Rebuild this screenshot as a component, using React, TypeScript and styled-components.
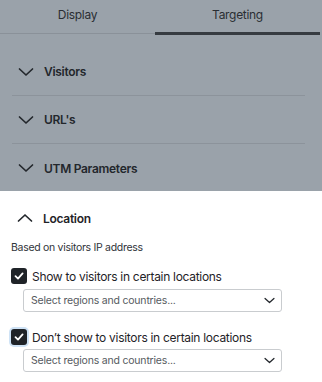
import React from "react";
import styled, { createGlobalStyle } from "styled-components";

const Global = createGlobalStyle`
  html, body { margin: 0; padding: 0; background: #ffffff; }
  body { font-family: Inter, "Noto Sans", Arial, sans-serif; -webkit-font-smoothing: antialiased; }
  * { box-sizing: border-box; }
`;

const Page = styled.div`
  width: 322px;
  height: 382px;
  display: flex;
  flex-direction: column;
  overflow: hidden;
  background: #ffffff;
`;

const Dimmed = styled.div`
  background: #9aa2aa;
  display: flex;
  flex-direction: column;
  height: 191px;
`;

const Tabs = styled.div`
  display: grid;
  grid-template-columns: 155px 1fr;
  height: 35px;
`;

const Tab = styled.div<{ $active?: boolean }>`
  display: flex;
  align-items: center;
  justify-content: center;
  font-size: 12px;
  letter-spacing: -0.3px;
  color: #2a2e33;
  padding-bottom: 4px;
  border-bottom: ${(p) => (p.$active ? "3px solid #363b41" : "1px solid #8a9199")};
  margin-right: ${(p) => (p.$active ? "2px" : "0")};
  height: ${(p) => (p.$active ? "35px" : "34px")};
`;

const List = styled.div`
  padding: 0 17px 0 12px;
  display: flex;
  flex-direction: column;
  margin-top: 13px;
`;

const Item = styled.div<{ $last?: boolean }>`
  display: flex;
  align-items: center;
  gap: 10px;
  height: 48px;
  padding-left: 6px;
  border-bottom: ${(p) => (p.$last ? "none" : "1px solid #8c939b")};
  font-size: 12px;
  letter-spacing: -0.3px;
  font-weight: 600;
  color: #23272c;
`;

const Sheet = styled.div`
  display: flex;
  flex-direction: column;
  padding: 0 11px;
`;

const Header = styled.div`
  display: flex;
  align-items: center;
  gap: 10px;
  height: 50px;
  padding-left: 6px;
  padding-top: 4px;
  font-size: 12px;
  letter-spacing: -0.3px;
  font-weight: 600;
  color: #1f2328;
`;

const Hint = styled.div`
  font-size: 10.5px;
  letter-spacing: -0.3px;
  line-height: 14px;
  color: #30343a;
`;

const CheckRow = styled.label<{ $gap: number }>`
  display: flex;
  align-items: center;
  gap: 5px;
  height: 16px;
  font-size: 12px;
  letter-spacing: -0.3px;
  color: #1f2328;
  margin-top: ${(p) => p.$gap}px;
`;

const Box = styled.span<{ $focus?: boolean }>`
  width: 16px;
  height: 16px;
  border-radius: 3px;
  background: #1f2328;
  display: flex;
  align-items: center;
  justify-content: center;
  box-shadow: ${(p) => (p.$focus ? "0 0 0 2px #cfe3f6" : "none")};
`;

const Select = styled.div<{ $gap: number }>`
  margin: ${(p) => p.$gap}px 0 0 12px;
  width: 259px;
  height: 23px;
  border: 1px solid #c9cccf;
  border-radius: 3px;
  display: flex;
  align-items: center;
  justify-content: space-between;
  padding: 0 6px 0 7px;
  font-size: 10.5px;
  letter-spacing: -0.2px;
  color: #555a60;
`;

const Chevron = ({ up, size = 16, color = "#23272c", w = 1.7 }: { up?: boolean; size?: number; color?: string; w?: number }) => (
  <svg width={size} height={size} viewBox="0 0 16 16" fill="none">
    <path
      d={up ? "M1.5 11 L8 5 L14.5 11" : "M1.5 5 L8 11 L14.5 5"}
      stroke={color}
      strokeWidth={w}
      strokeLinecap="round"
      strokeLinejoin="round"
    />
  </svg>
);

const Check = () => (
  <svg width="12" height="12" viewBox="0 0 12 12" fill="none">
    <path d="M2.5 6.2 L5 8.6 L9.6 3.4" stroke="#ffffff" strokeWidth="1.8" strokeLinecap="round" strokeLinejoin="round" />
  </svg>
);

export default function App() {
  return (
    <Page>
      <Global />
      <Dimmed>
        <Tabs>
          <Tab>Display</Tab>
          <Tab $active>Targeting</Tab>
        </Tabs>
        <List>
          <Item>
            <Chevron />
            Visitors
          </Item>
          <Item>
            <Chevron />
            URL's
          </Item>
          <Item $last>
            <Chevron />
            UTM Parameters
          </Item>
        </List>
      </Dimmed>
      <Sheet>
        <Header>
          <Chevron up />
          Location
        </Header>
        <Hint>Based on visitors IP address</Hint>
        <CheckRow $gap={13}>
          <Box>
            <Check />
          </Box>
          Show to visitors in certain locations
        </CheckRow>
        <Select $gap={5}>
          Select regions and countries...
          <Chevron size={11} w={1.8} />
        </Select>
        <CheckRow $gap={17}>
          <Box $focus>
            <Check />
          </Box>
          Don’t show to visitors in certain locations
        </CheckRow>
        <Select $gap={4}>
          Select regions and countries...
          <Chevron size={11} w={1.8} />
        </Select>
      </Sheet>
    </Page>
  );
}
